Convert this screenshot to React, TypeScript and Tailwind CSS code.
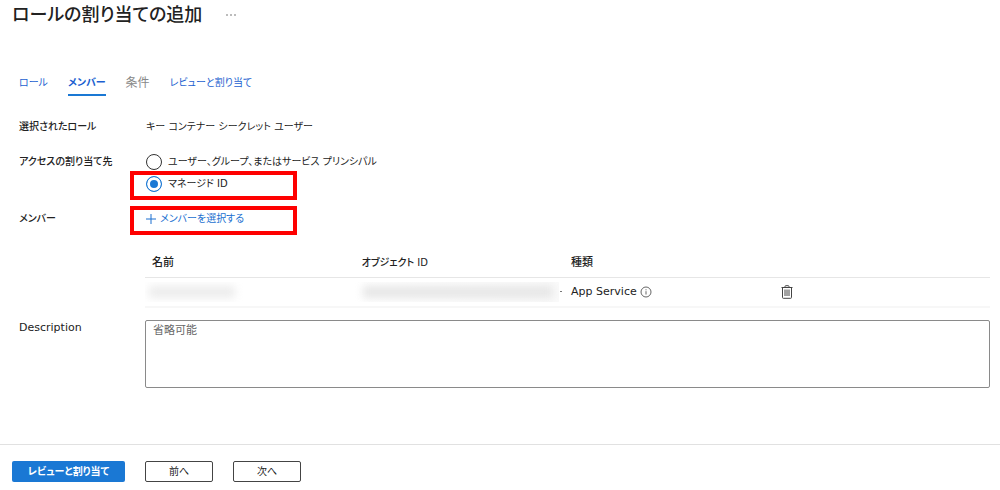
import React, { useState } from 'react';
import clsx from 'clsx';

const tabs = [
  { id: 'role', label: 'ロール' },
  { id: 'members', label: 'メンバー' },
  { id: 'conditions', label: '条件', disabled: true },
  { id: 'review', label: 'レビューと割り当て' },
];

const principals = [
  { id: 'user', label: 'ユーザー、グループ、またはサービス プリンシパル' },
  { id: 'managed', label: 'マネージド ID', highlight: true },
];

function Highlight() {
  return <span aria-hidden="true" className="pointer-events-none absolute -top-[3px] -left-4 h-[29px] w-[167px] border-4 border-[#fe0000]" />;
}

function InfoIcon() {
  return (
    <svg viewBox="0 0 12 12" className="h-3 w-3 shrink-0" fill="none" stroke="#555" strokeWidth="0.9">
      <circle cx="6" cy="6" r="5" />
      <path d="M6 5.2v3.3M6 3.3v1" />
    </svg>
  );
}

function TrashIcon() {
  return (
    <svg viewBox="0 0 12 14" className="h-3.5 w-3" fill="none" stroke="#444" strokeWidth="1">
      <path d="M0.5 2.5h11M4 2.5v-1q0-.8.8-.8h2.4q.8 0 .8.8v1M1.5 2.5v10q0 .8.8.8h7.4q.8 0 .8-.8v-10" />
      <path d="M4 4.5v6.5M6 4.5v6.5M8 4.5v6.5" />
    </svg>
  );
}

export default function App() {
  const [activeTab, setActiveTab] = useState('members');
  const [principal, setPrincipal] = useState('managed');
  const [description, setDescription] = useState('');

  return (
    <div className="bg-white font-['DejaVu_Sans','Noto_Sans_CJK_JP',sans-serif] text-[10px] leading-5 text-[#222] [font-feature-settings:'palt']">
      <header className="flex items-center gap-6 pl-3">
        <h1 className="text-[18px] leading-[30px] font-medium">ロールの割り当ての追加</h1>
        <button aria-label="その他" className="text-[#666]">
          <svg viewBox="0 0 10 2" className="h-0.5 w-2.5" fill="currentColor">
            <circle cx="1" cy="1" r="0.8" />
            <circle cx="5" cy="1" r="0.8" />
            <circle cx="9" cy="1" r="0.8" />
          </svg>
        </button>
      </header>

      <main className="pr-2.5 pl-[19px]">
        <nav className="mt-[43px] flex gap-5">
          {tabs.map((tab) => (
            <button
              key={tab.id}
              disabled={tab.disabled}
              onClick={() => setActiveTab(tab.id)}
              className={clsx(
                'border-b-2 pb-px',
                tab.disabled ? 'text-xs leading-5 text-[#888]' : 'text-[#1c5fd0]',
                activeTab === tab.id ? 'border-[#1a78d4] font-bold' : 'border-transparent'
              )}
            >
              {tab.label}
            </button>
          ))}
        </nav>

        <div className="mt-[21px] grid grid-cols-[127px_1fr]">
          <span className="font-medium">選択されたロール</span>
          <span>キー コンテナー シークレット ユーザー</span>
        </div>

        <div role="radiogroup" aria-labelledby="assign-to" className="mt-[15px] grid grid-cols-[127px_1fr]">
          <span id="assign-to" className="font-medium">アクセスの割り当て先</span>
          <div className="space-y-0.5">
            {principals.map((p) => (
              <div key={p.id} className="relative">
                <label className="flex items-center gap-1.5">
                  <input
                    type="radio"
                    name="principal"
                    checked={principal === p.id}
                    onChange={() => setPrincipal(p.id)}
                    className="h-4 w-4 appearance-none rounded-full border border-[#333] bg-white checked:border-[#1a78d4] checked:bg-[#1a78d4] checked:shadow-[inset_0_0_0_3px_white]"
                  />
                  {p.label}
                </label>
                {p.highlight && <Highlight />}
              </div>
            ))}
          </div>
        </div>

        <div className="mt-[15px] grid grid-cols-[127px_1fr]">
          <span className="font-medium">メンバー</span>
          <div className="relative">
            <button className="flex items-center gap-1 text-[#1a6fd0]">
              <svg viewBox="0 0 10 10" className="h-2.5 w-2.5" fill="none" stroke="currentColor">
                <path d="M5 0v10M0 5h10" />
              </svg>
              メンバーを選択する
            </button>
            <Highlight />
          </div>
        </div>

        <div className="mt-[18px] pl-[126px]">
          <table className="w-full table-fixed border-collapse text-left">
            <thead>
              <tr className="h-[30px] border-b border-[#e6e6e6]">
                <th className="w-[24.8%] pt-0.5 pb-0 pl-[7px] text-[11px] font-medium">名前</th>
                <th className="w-[24.8%] pt-0.5 pb-0 pl-[7px] font-medium">オブジェクト ID</th>
                <th className="w-[24.8%] pt-0.5 pb-0 pl-[7px] text-[11px] font-medium">種類</th>
                <th aria-label="操作" />
              </tr>
            </thead>
            <tbody>
              <tr className="h-[30px] border-b-2 border-[#f7f7f7]">
                <td className="p-0">
                  <div className="h-5 w-[100px] overflow-hidden py-1">
                    <div className="ml-1 h-3 w-[86px] bg-[#ececec] blur-xs" />
                  </div>
                </td>
                <td className="p-0">
                  <div className="flex items-center justify-between">
                    <div className="h-5 w-[204px] overflow-hidden bg-linear-to-r from-white to-[#fafafa] py-1">
                      <div className="ml-2 h-3 w-[190px] bg-[#e6e6e6] blur-xs" />
                    </div>
                    <span className="mr-0.5 h-px w-0.5 bg-[#777]" />
                  </div>
                </td>
                <td className="py-0 pl-[7px]">
                  <div className="flex items-center gap-[3px] text-[11px]">
                    App Service
                    <InfoIcon />
                  </div>
                </td>
                <td className="py-0 pl-[7px]">
                  <button aria-label="削除" className="block">
                    <TrashIcon />
                  </button>
                </td>
              </tr>
            </tbody>
          </table>
        </div>

        <div className="mt-3 grid grid-cols-[126px_1fr]">
          <label htmlFor="description" className="text-[11px] leading-4 font-medium">Description</label>
          <textarea
            id="description"
            value={description}
            onChange={(e) => setDescription(e.target.value)}
            placeholder="省略可能"
            className="block h-17 w-full resize-none rounded-xs border border-[#8a8a8a] px-[7px] py-0 text-[11px] leading-5 placeholder:text-[#666]"
          />
        </div>
      </main>

      <footer className="mt-14 flex gap-5 border-t border-[#e1e1e1] pt-4 pl-3">
        <button className="h-[21px] w-[113px] rounded-xs bg-[#1a78d4] font-bold text-white">レビューと割り当て</button>
        <button className="h-[21px] w-[68px] rounded-xs border border-[#444] leading-[19px]">前へ</button>
        <button className="h-[21px] w-[68px] rounded-xs border border-[#444] leading-[19px]">次へ</button>
      </footer>
    </div>
  );
}
